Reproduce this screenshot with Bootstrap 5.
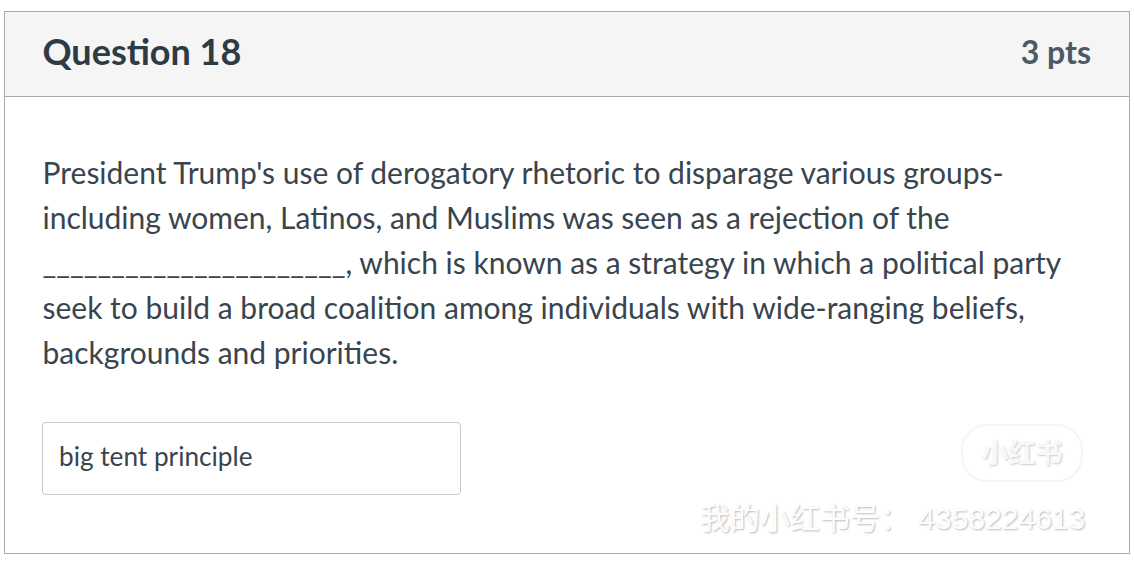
<!DOCTYPE html>
<html lang="en"><head><meta charset="utf-8">
<link href="https://cdn.jsdelivr.net/npm/bootstrap@5.3.0/dist/css/bootstrap.min.css" rel="stylesheet">
<style>
html,body{margin:0;background:#fff;height:570px;overflow:hidden}
body{font-family:Lato,"Noto Sans CJK SC",sans-serif;color:#38454e}
.qbox{margin:11px 4px 0 4px;width:1126px;height:543px;border:1px solid #ababab;display:flex;flex-direction:column;position:relative}
.qhead{height:85px;background:#f5f5f5;border-bottom:1px solid #ababab;padding:0 38px 4px 37.5px;display:flex;align-items:center;justify-content:space-between}
.qtitle{font-size:36px;font-weight:700;margin:0;line-height:1.2;color:#2d3b45}
.qpts{font-size:32px;font-weight:700;color:#4d5a63}
.qbody{padding:53px 38px 0 37.5px;font-size:30px;line-height:45px}
.qanswer{margin-top:47px;margin-left:-.5px;width:419px;height:73px;border:1px solid #c7c7c7;border-radius:4px;padding:0 16px 4px;display:flex;align-items:center;font-size:26.2px}
.wm1{position:absolute;left:956px;top:412px;width:122px;height:58px;border:2px solid rgba(235,235,235,.5);border-radius:26px;color:#f8f8f8;font-size:27px;font-weight:700;display:flex;align-items:center;justify-content:center;text-shadow:1px 1px 2px #ccc}
.wm2{position:absolute;left:695px;top:484px;font-family:"Liberation Sans","Noto Sans CJK SC",sans-serif;font-size:30px;color:#fdfdfd;white-space:nowrap;text-shadow:1px 1px 2px #bbb}
</style></head><body>
<div class="qbox">
<div class="qhead"><h2 class="qtitle">Question 18</h2><div class="qpts">3 pts</div></div>
<div class="qbody">
<div>President Trump's use of derogatory rhetoric to disparage various groups-<br>including women, Latinos, and Muslims was seen as a rejection of the<br>______________________, which is known as a strategy in which a political party<br>seek to build a broad coalition among individuals with wide-ranging beliefs,<br>backgrounds and priorities.</div>
<div class="qanswer">big tent principle</div>
</div>
<div class="wm1">小红书</div>
<div class="wm2">我的小红书号： 4358224613</div>
</div>
<script src="https://cdn.jsdelivr.net/npm/bootstrap@5.3.0/dist/js/bootstrap.bundle.min.js"></script>
</body></html>
